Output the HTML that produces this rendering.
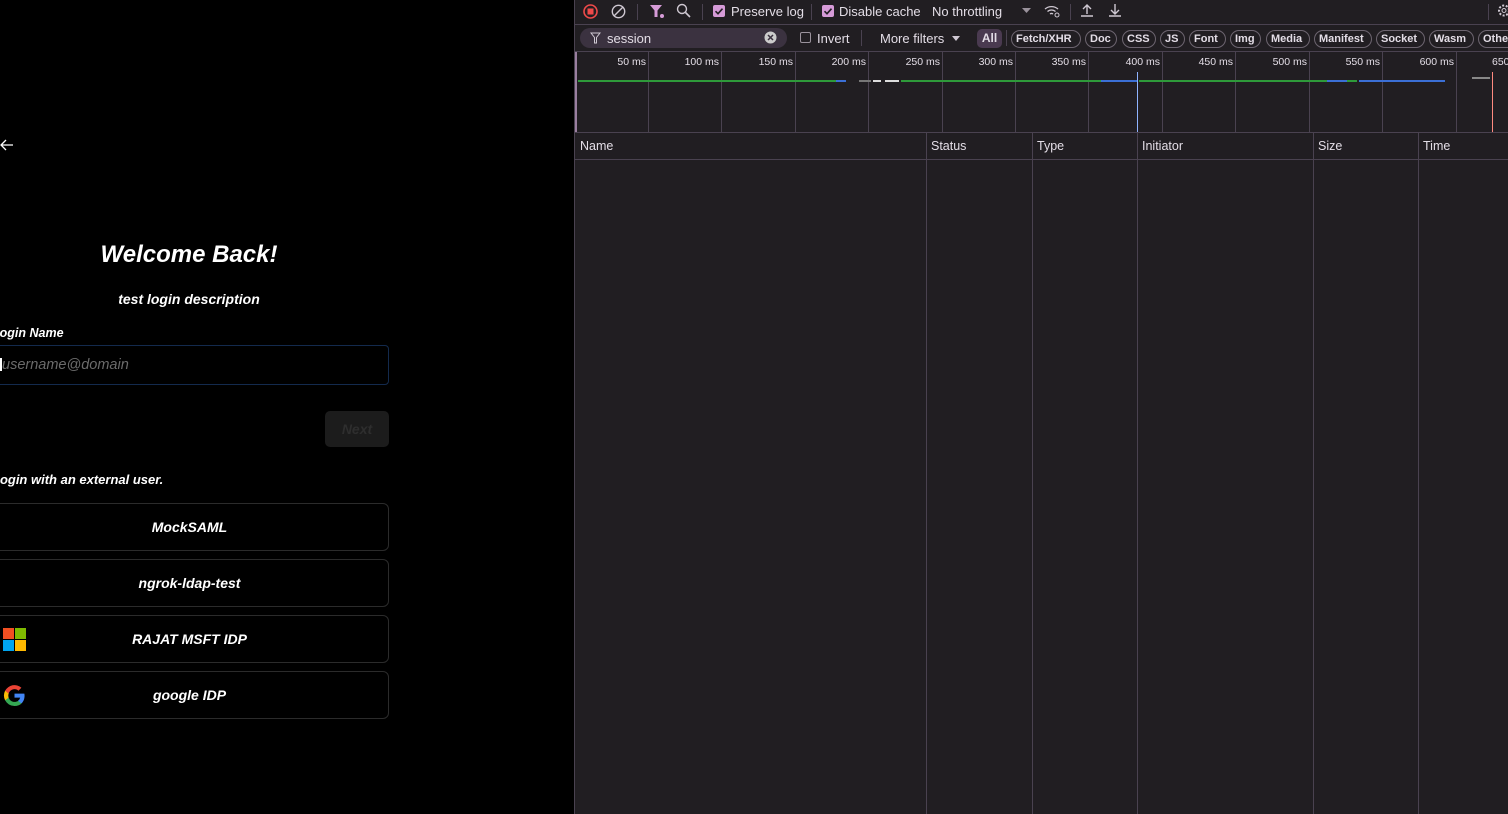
<!DOCTYPE html>
<html><head><meta charset="utf-8"><style>
*{margin:0;padding:0;box-sizing:border-box}
body{width:1508px;height:814px;overflow:hidden;background:#000;font-family:"Liberation Sans",sans-serif;position:relative}
.l{position:absolute;left:0;top:0;width:575px;height:814px;background:#000;color:#fff}
.a{position:absolute}
.bi{font-style:italic;font-weight:bold}
.btn{position:absolute;left:-10px;width:399px;height:48px;border:1px solid #2b2b2b;border-radius:6px;text-align:center;line-height:46px;font-size:14px;font-style:italic;font-weight:bold;color:#fff}
.d{position:absolute;left:574px;top:0;width:934px;height:814px;background:#211e22;border-left:1px solid #4a4250;color:#e3dde6;font-size:12.5px}
.hl{position:absolute;left:0;right:0;height:1px;background:#4a4250}
.vl{position:absolute;width:1px;background:#4a4250}
.pill{position:absolute;top:30px;height:18px;border:1px solid #6d6570;border-radius:9px;font-size:11px;font-weight:bold;line-height:16px;padding:0 4px;color:#e3dde6}
.tk{position:absolute;top:56px;font-size:10.5px;color:#e3dde6;text-align:right;width:60px}
.cb{position:absolute;width:12px;height:12px;border-radius:2px;background:#d69bd8}
</style></head><body>
<div class="l">
 <svg class="a" style="left:0;top:139px" width="14" height="12" viewBox="0 0 14 12"><path d="M13 6H1M6 1L1 6l5 5" stroke="#fff" stroke-width="1.3" fill="none"/></svg>
 <div class="a bi" style="left:0;width:378px;top:241px;text-align:center;font-size:24px">Welcome Back!</div>
 <div class="a bi" style="left:0;width:378px;top:291px;text-align:center;font-size:14px">test login description</div>
 <div class="a bi" style="left:-8px;top:326px;font-size:12.5px">Login Name</div>
 <div class="a" style="left:-10px;top:345px;width:399px;height:40px;border:1px solid #132a4d;border-radius:4px"></div>
 <div class="a" style="left:0;top:365px;width:2px;height:13px;margin-top:-7px;background:#fff"></div>
 <div class="a" style="left:2px;top:357px;font-size:14.5px;font-style:italic;color:#6b6b6b">username@domain</div>
 <div class="a bi" style="left:325px;top:411px;width:64px;height:36px;background:#1c1c1c;border-radius:5px;text-align:center;line-height:36px;font-size:14px;color:#2e2e2e">Next</div>
 <div class="a bi" style="left:-8px;top:472px;font-size:13px">Login with an external user.</div>
 <div class="btn" style="top:503px">MockSAML</div>
 <div class="btn" style="top:559px">ngrok-ldap-test</div>
 <div class="btn" style="top:615px">RAJAT MSFT IDP</div>
 <div class="btn" style="top:671px">google IDP</div>
 <svg class="a" style="left:3px;top:628px" width="23" height="23"><rect width="11" height="11" fill="#f25022"/><rect x="12" width="11" height="11" fill="#7fba00"/><rect y="12" width="11" height="11" fill="#00a4ef"/><rect x="12" y="12" width="11" height="11" fill="#ffb900"/></svg>
 <svg class="a" style="left:3px;top:684px" width="23" height="23" viewBox="0 0 24 24"><path d="M22.5 12.2c0-.8-.1-1.5-.2-2.2H12v4.2h5.9a5 5 0 0 1-2.2 3.3v2.7h3.6c2-1.9 3.2-4.7 3.2-8z" fill="#4285f4"/><path d="M12 23c3 0 5.5-1 7.3-2.7l-3.6-2.7c-1 .7-2.200 1.1-3.7 1.1-2.8 0-5.2-1.9-6.1-4.5H2.2v2.8A11 11 0 0 0 12 23z" fill="#34a853"/><path d="M5.9 14.2a6.6 6.6 0 0 1 0-4.3V7.1H2.2a11 11 0 0 0 0 9.9z" fill="#fbbc05"/><path d="M12 5.4c1.6 0 3 .6 4.1 1.6l3.1-3.1A11 11 0 0 0 2.2 7.1l3.7 2.8C6.8 7.300 9.2 5.4 12 5.4z" fill="#ea4335"/></svg>
</div>
<div class="d">
 <svg class="a" style="left:8px;top:4px" width="15" height="15"><circle cx="7.5" cy="7.5" r="6.5" stroke="#ef4a4a" stroke-width="1.6" fill="none"/><rect x="4.5" y="4.5" width="6" height="6" fill="#ef4a4a"/></svg>
 <svg class="a" style="left:36px;top:4px" width="15" height="15"><circle cx="7.5" cy="7.5" r="6.2" stroke="#cfc8d2" stroke-width="1.4" fill="none"/><path d="M3 12L12 3" stroke="#cfc8d2" stroke-width="1.4"/></svg>
 <div class="vl" style="left:62px;top:4px;height:16px"></div>
 <svg class="a" style="left:74px;top:4px" width="16" height="15"><path d="M1 1h12L8.5 6.5V13H5.5V6.5z" fill="#d69bd8"/><circle cx="13" cy="12" r="2" fill="#d69bd8"/></svg>
 <svg class="a" style="left:101px;top:3px" width="15" height="15"><circle cx="6" cy="6" r="4.5" stroke="#cfc8d2" stroke-width="1.4" fill="none"/><path d="M9.5 9.5L14 14" stroke="#cfc8d2" stroke-width="1.6"/></svg>
 <div class="vl" style="left:127px;top:4px;height:16px"></div>
 <svg class="a" style="left:138px;top:5px" width="12" height="12"><rect width="12" height="12" rx="2" fill="#d69bd8"/><path d="M2.5 6.2l2.5 2.5 4.5-5" stroke="#211e22" stroke-width="1.6" fill="none"/></svg><div class="a" style="left:156px;top:4px;font-size:13px">Preserve log</div>
 <div class="vl" style="left:236px;top:4px;height:16px"></div>
 <svg class="a" style="left:247px;top:5px" width="12" height="12"><rect width="12" height="12" rx="2" fill="#d69bd8"/><path d="M2.5 6.2l2.5 2.5 4.5-5" stroke="#211e22" stroke-width="1.6" fill="none"/></svg><div class="a" style="left:264px;top:4px;font-size:13px">Disable cache</div>
 <div class="a" style="left:357px;top:4px;font-size:13px">No throttling</div>
 <svg class="a" style="left:447px;top:8px" width="9" height="6"><path d="M0 0h9L4.5 5z" fill="#9a929c"/></svg>
 <svg class="a" style="left:468px;top:3px" width="18" height="16"><path d="M2 6a10 10 0 0 1 13 0M4.5 8.5a6 6 0 0 1 8 0M7 11a2.5 2.5 0 0 1 3 0" stroke="#cfc8d2" stroke-width="1.3" fill="none"/><circle cx="14" cy="12" r="2" stroke="#cfc8d2" fill="none"/></svg>
 <div class="vl" style="left:495px;top:4px;height:16px"></div>
 <svg class="a" style="left:505px;top:3px" width="14" height="15"><path d="M7 11V2M3 6l4-4 4 4M1 13h12" stroke="#cfc8d2" stroke-width="1.4" fill="none"/></svg>
 <svg class="a" style="left:533px;top:3px" width="14" height="15"><path d="M7 1v10M3 7l4 4 4-4M1 13h12" stroke="#cfc8d2" stroke-width="1.4" fill="none"/></svg>
 <div class="vl" style="left:913px;top:4px;height:16px"></div>
 <svg class="a" style="left:922px;top:3px" width="14" height="15"><circle cx="7" cy="7.5" r="5" stroke="#cfc8d2" stroke-width="2" stroke-dasharray="2 1.6" fill="none"/><circle cx="7" cy="7.5" r="2" stroke="#cfc8d2" fill="none"/></svg>
 <div class="hl" style="top:24px"></div>
 <div class="a" style="left:5px;top:28px;width:207px;height:20px;border-radius:10px;background:#3b3240"></div>
 <svg class="a" style="left:15px;top:32px" width="11" height="12"><path d="M1 1h9L6.5 5.5V11h-2V5.5z" stroke="#cfc8d2" fill="none"/></svg>
 <div class="a" style="left:32px;top:31px;font-size:13px">session</div>
 <svg class="a" style="left:189px;top:31px" width="13" height="13"><circle cx="6.5" cy="6.5" r="6" fill="#ccc"/><path d="M4 4l5 5M9 4l-5 5" stroke="#3b3240" stroke-width="1.5"/></svg>
 <div class="a" style="left:225px;top:32px;width:11px;height:11px;border:1px solid #9a929c;border-radius:2px"></div>
 <div class="a" style="left:242px;top:31px;font-size:13px">Invert</div>
 <div class="vl" style="left:286px;top:30px;height:16px"></div>
 <div class="a" style="left:305px;top:31px;font-size:13px">More filters</div>
 <svg class="a" style="left:377px;top:36px" width="8" height="6"><path d="M0 0h8L4 5z" fill="#cfc8d2"/></svg>
 <div class="a" style="left:402px;top:29px;width:25px;height:19px;border-radius:5px;background:#4a3a50;font-size:12px;font-weight:bold;text-align:center;line-height:19px">All</div>
 <div class="vl" style="left:431px;top:30px;height:16px"></div>
 <div class="pill" style="left:436px;width:70px">Fetch/XHR</div>
 <div class="pill" style="left:510px;width:32px">Doc</div>
 <div class="pill" style="left:547px;width:34px">CSS</div>
 <div class="pill" style="left:585px;width:25px">JS</div>
 <div class="pill" style="left:614px;width:37px">Font</div>
 <div class="pill" style="left:655px;width:31px">Img</div>
 <div class="pill" style="left:691px;width:44px">Media</div>
 <div class="pill" style="left:739px;width:58px">Manifest</div>
 <div class="pill" style="left:801px;width:49px">Socket</div>
 <div class="pill" style="left:854px;width:45px">Wasm</div>
 <div class="pill" style="left:903px;width:50px">Other</div>
 <div class="hl" style="top:51px"></div>
 <div class="vl" style="left:0;top:52px;height:80px;width:2px;background:#9a7fa0"></div>
 <div class="vl" style="left:73px;top:52px;height:80px"></div><div class="vl" style="left:146px;top:52px;height:80px"></div><div class="vl" style="left:220px;top:52px;height:80px"></div><div class="vl" style="left:293px;top:52px;height:80px"></div><div class="vl" style="left:367px;top:52px;height:80px"></div><div class="vl" style="left:440px;top:52px;height:80px"></div><div class="vl" style="left:513px;top:52px;height:80px"></div><div class="vl" style="left:587px;top:52px;height:80px"></div><div class="vl" style="left:660px;top:52px;height:80px"></div><div class="vl" style="left:734px;top:52px;height:80px"></div><div class="vl" style="left:807px;top:52px;height:80px"></div><div class="vl" style="left:881px;top:52px;height:80px"></div>
 <div class="tk" style="left:11px">50 ms</div><div class="tk" style="left:84px">100 ms</div><div class="tk" style="left:158px">150 ms</div><div class="tk" style="left:231px">200 ms</div><div class="tk" style="left:305px">250 ms</div><div class="tk" style="left:378px">300 ms</div><div class="tk" style="left:451px">350 ms</div><div class="tk" style="left:525px">400 ms</div><div class="tk" style="left:598px">450 ms</div><div class="tk" style="left:672px">500 ms</div><div class="tk" style="left:745px">550 ms</div><div class="tk" style="left:819px">600 ms</div><div class="a" style="left:917px;top:56px;font-size:10.5px">650</div>
 <div class="a" style="left:3px;top:80px;width:258px;height:2px;background:#2e9a3a"></div>
 <div class="a" style="left:261px;top:80px;width:10px;height:2px;background:#3b6fd6"></div>
 <div class="a" style="left:284px;top:80px;width:12px;height:2px;background:#777"></div>
 <div class="a" style="left:298px;top:80px;width:8px;height:2px;background:#ddd"></div>
 <div class="a" style="left:310px;top:80px;width:14px;height:2px;background:#ddd"></div>
 <div class="a" style="left:326px;top:80px;width:200px;height:2px;background:#2e9a3a"></div>
 <div class="a" style="left:526px;top:80px;width:36px;height:2px;background:#3b6fd6"></div>
 <div class="a" style="left:564px;top:80px;width:188px;height:2px;background:#2e9a3a"></div>
 <div class="a" style="left:752px;top:80px;width:20px;height:2px;background:#3b6fd6"></div>
 <div class="a" style="left:772px;top:80px;width:10px;height:2px;background:#2e9a3a"></div>
 <div class="a" style="left:784px;top:80px;width:86px;height:2px;background:#3b6fd6"></div>
 <div class="a" style="left:897px;top:77px;width:18px;height:2px;background:#888"></div>
 <div class="vl" style="left:562px;top:72px;height:60px;background:#8fb3ff"></div>
 <div class="vl" style="left:917px;top:72px;height:60px;background:#ff8a80"></div>
 <div class="hl" style="top:132px"></div>
 <div class="a" style="left:5px;top:139px;font-size:12.5px">Name</div>
 <div class="a" style="left:356px;top:139px;font-size:12.5px">Status</div>
 <div class="a" style="left:462px;top:139px;font-size:12.5px">Type</div>
 <div class="a" style="left:567px;top:139px;font-size:12.5px">Initiator</div>
 <div class="a" style="left:743px;top:139px;font-size:12.5px">Size</div>
 <div class="a" style="left:848px;top:139px;font-size:12.5px">Time</div>
 <div class="hl" style="top:159px"></div>
 <div class="vl" style="left:351px;top:133px;height:681px"></div><div class="vl" style="left:457px;top:133px;height:681px"></div><div class="vl" style="left:562px;top:133px;height:681px"></div><div class="vl" style="left:738px;top:133px;height:681px"></div><div class="vl" style="left:843px;top:133px;height:681px"></div>
</div>
</body></html>
